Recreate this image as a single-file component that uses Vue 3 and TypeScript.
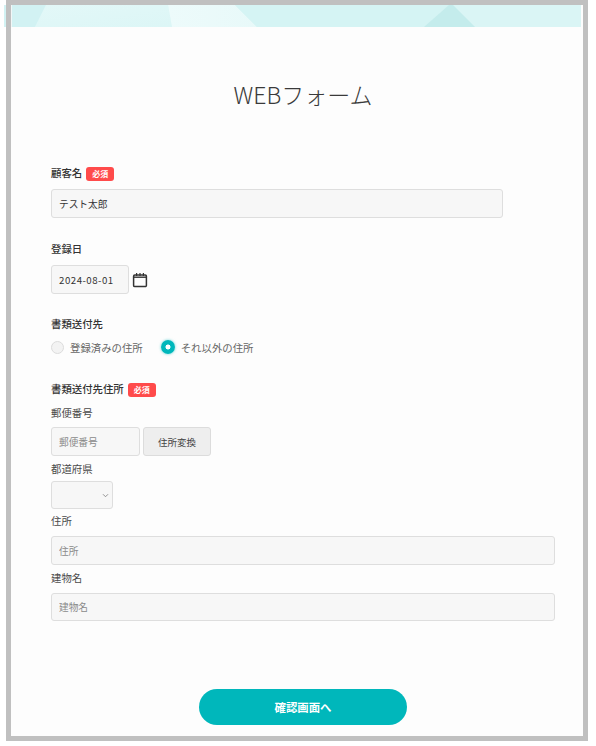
<script setup lang="ts">
import { ref } from 'vue'

const customer = ref<string>('テスト太郎')
const registered = ref<string>('2024-08-01')
const destination = ref<string>('other')
const postal = ref<string>('')
const prefecture = ref<string>('')
const address = ref<string>('')
const building = ref<string>('')
</script>

<template>
  <div class="frame">
    <div class="band">
      <svg class="band-art" viewBox="4 5 577 22" preserveAspectRatio="none" aria-hidden="true">
        <defs>
          <linearGradient id="soft" x1="0" y1="0" x2="1" y2="1">
            <stop offset="0" stop-color="#e3f8f8" />
            <stop offset="1" stop-color="#dcf6f6" />
          </linearGradient>
          <linearGradient id="pale" x1="0" y1="0" x2="1" y2="0">
            <stop offset="0" stop-color="#edfbfb" />
            <stop offset="1" stop-color="#e8f9f9" />
          </linearGradient>
        </defs>
        <rect x="4" y="5" width="577" height="22" fill="#d6f4f4" />
        <polygon points="4,5 46,5 35,27 4,27" fill="#d2f2f3" />
        <polygon points="46,5 168,5 172,27 35,27" fill="url(#soft)" />
        <polygon points="168,5 235,5 257,27 172,27" fill="url(#pale)" />
        <polygon points="235,5 449,5 424,27 257,27" fill="#d5f4f4" />
        <polygon points="453,5 581,5 581,27 475,27" fill="#daf5f5" />
        <polygon points="449,5 453,5 475,27 424,27" fill="#c4ecec" />
      </svg>
    </div>

    <main class="page">
      <h1 class="title">WEBフォーム</h1>

      <form class="form" @submit.prevent>
        <section class="group group-first">
          <div class="label-row">
            <span class="label strong">顧客名</span>
            <span class="badge">必須</span>
          </div>
          <input v-model="customer" class="field field-name" type="text" />
        </section>

        <section class="group">
          <div class="label-row">
            <span class="label strong">登録日</span>
          </div>
          <div class="date-row">
            <input v-model="registered" class="field field-date" type="text" />
            <svg class="calendar" viewBox="0 0 16 16" aria-hidden="true">
              <path d="M1.6 4.2a1.2 1.2 0 0 1 1.2-1.2h10.4a1.2 1.2 0 0 1 1.2 1.2v9.2a1.2 1.2 0 0 1-1.2 1.2H2.8a1.2 1.2 0 0 1-1.2-1.2z" fill="none" stroke="#333" stroke-width="1.5" />
              <path d="M1.6 5.2h12.8" stroke="#333" stroke-width="1.4" />
              <path d="M4.6 1v3M8 1v3M11.4 1v3" stroke="#333" stroke-width="1.2" />
            </svg>
          </div>
        </section>

        <section class="group group-radio">
          <div class="label-row">
            <span class="label strong">書類送付先</span>
          </div>
          <div class="radios">
            <label class="radio">
              <input v-model="destination" type="radio" name="destination" value="registered" />
              <span>登録済みの住所</span>
            </label>
            <label class="radio">
              <input v-model="destination" type="radio" name="destination" value="other" />
              <span>それ以外の住所</span>
            </label>
          </div>
        </section>

        <section class="group group-address">
          <div class="label-row">
            <span class="label strong">書類送付先住所</span>
            <span class="badge">必須</span>
          </div>

          <span class="label sub sub-first">郵便番号</span>
          <div class="postal-row">
            <input v-model="postal" class="field field-postal" type="text" placeholder="郵便番号" />
            <button class="convert" type="button">住所変換</button>
          </div>

          <span class="label sub">都道府県</span>
          <div class="select-wrap">
            <select v-model="prefecture" class="field field-select">
              <option value=""></option>
              <option value="tokyo">東京都</option>
              <option value="osaka">大阪府</option>
            </select>
            <svg class="chevron" viewBox="0 0 8 6" aria-hidden="true">
              <path d="M1 1.5l3 3 3-3" fill="none" stroke="#888" stroke-width="1.1" />
            </svg>
          </div>

          <span class="label sub sub-address">住所</span>
          <input v-model="address" class="field field-wide" type="text" placeholder="住所" />

          <span class="label sub sub-building">建物名</span>
          <input v-model="building" class="field field-wide field-last" type="text" placeholder="建物名" />
        </section>

        <div class="actions">
          <button class="submit" type="submit">確認画面へ</button>
        </div>
      </form>
    </main>
  </div>
</template>

<style>
html,
body {
  background: #ffffff;
}
</style>

<style scoped>
.frame {
  position: relative;
  box-sizing: border-box;
  width: 582px;
  height: 741px;
  margin-left: 6px;
  padding: 5px;
  background: #fdfdfd;
  font-family: "Noto Sans CJK JP", "Noto Sans", sans-serif;
  color: #333;
}

.frame::after {
  content: "";
  position: absolute;
  inset: 0;
  border: 5px solid #c0c0c0;
  pointer-events: none;
}

.band {
  position: relative;
  height: 22px;
  margin: 0 2px 0 -7px;
}

.band::after {
  content: "";
  position: absolute;
  top: 0;
  bottom: 0;
  left: 7px;
  width: 1px;
  background: #f2f7f7;
}

.band-art {
  display: block;
  width: 100%;
  height: 100%;
}

.page {
  padding: 0 28px 0 40px;
}

.title {
  margin: 50px 0 0;
  font-size: 23px;
  line-height: 34px;
  font-weight: 300;
  text-align: center;
  color: #3a3a3a;
}

.group {
  margin-top: 25px;
}

.group-first {
  margin-top: 56px;
}

.group-radio {
  margin-top: 24px;
}

.group-address {
  margin-top: 28px;
}

.label-row {
  display: flex;
  align-items: center;
  gap: 4px;
  height: 14px;
  margin-bottom: 8px;
}

.label {
  font-size: 10.4px;
  line-height: 14px;
  color: #3c3c3c;
}

.strong {
  font-weight: 500;
  color: #333;
  position: relative;
  top: -1px;
}

.sub {
  display: block;
  margin: 6px 0 5px;
  font-weight: 400;
  color: #4a4a4a;
}

.sub-first {
  margin: 9px 0 7px;
}

.sub-address {
  margin: 5px 0 8px;
}

.sub-building {
  margin: 6px 0 8px;
}

.badge {
  box-sizing: border-box;
  width: 28px;
  height: 14px;
  border-radius: 3px;
  background: #ff4b4b;
  color: #fff;
  font-size: 8px;
  font-weight: 700;
  line-height: 14px;
  text-align: center;
}

.field {
  box-sizing: border-box;
  display: block;
  height: 29px;
  padding: 0 7px;
  border: 1px solid #dedede;
  border-radius: 3px;
  background: #f7f7f7;
  font-family: inherit;
  font-size: 9.7px;
  color: #333;
  outline: none;
}

.field::placeholder {
  color: #8a8a8a;
  opacity: 1;
}

.field-name {
  width: 452px;
}

.date-row {
  display: flex;
  align-items: center;
  gap: 3px;
}

.field-date {
  width: 78px;
  letter-spacing: 0.5px;
}

.calendar {
  width: 16px;
  height: 16px;
}

.radios {
  display: flex;
  gap: 18px;
  height: 16px;
  margin-top: -1px;
}

.radio {
  display: flex;
  align-items: center;
  gap: 6px;
  font-size: 10.4px;
  color: #666;
}

.radio input {
  appearance: none;
  box-sizing: border-box;
  width: 13px;
  height: 13px;
  margin: 0;
  border: 1px solid #dcdcdc;
  border-radius: 50%;
  background: #f3f3f3;
}

.radio input:checked {
  width: 14px;
  height: 14px;
  border: none;
  background: radial-gradient(circle, #fff 0 2.2px, #00b7bb 2.8px);
  box-shadow: 0 0 3px rgba(0, 183, 187, 0.6);
}

.postal-row {
  display: flex;
  gap: 3px;
}

.field-postal {
  width: 89px;
}

.convert {
  box-sizing: border-box;
  width: 68px;
  height: 29px;
  padding: 0;
  border: 1px solid #dcdcdc;
  border-radius: 3px;
  background: #eeeeee;
  font-family: inherit;
  font-size: 9.5px;
  color: #444;
}

.select-wrap {
  position: relative;
  width: 62px;
}

.field-select {
  width: 100%;
  height: 28px;
  appearance: none;
}

.chevron {
  position: absolute;
  top: 11.5px;
  right: 4px;
  width: 7px;
  height: 5px;
}

.field-wide {
  width: 504px;
}

.field-last {
  height: 28px;
}

.actions {
  display: flex;
  justify-content: center;
  margin-top: 68px;
}

.submit {
  width: 208px;
  height: 36px;
  padding: 0;
  border: none;
  border-radius: 18px;
  background: #00b7bb;
  color: #fff;
  font-family: inherit;
  font-size: 11.4px;
  font-weight: 700;
}
</style>
